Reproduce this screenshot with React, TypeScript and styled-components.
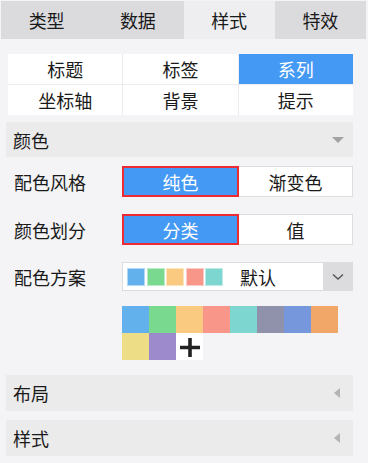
import React from "react";
import styled, { createGlobalStyle } from "styled-components";

const Global = createGlobalStyle`
  html, body { margin: 0; padding: 0; }
  body {
    background: #f4f4f6;
    font-family: "Noto Sans CJK SC", "Noto Sans", sans-serif;
    color: #222;
    width: 368px;
    height: 463px;
    overflow: hidden;
  }
`;

const Page = styled.div`
  display: flex;
  flex-direction: column;
  padding: 1px 2px 0 1px;
`;

const TabBar = styled.div`
  display: grid;
  grid-template-columns: repeat(4, 1fr);
  height: 38px;
  width: 365px;
`;

const Tab = styled.div<{ $active?: boolean }>`
  display: flex;
  align-items: center;
  justify-content: center;
  font-size: 18px;
  background: ${(p) => (p.$active ? "#eeeef0" : "#dbdbde")};
  color: #1a1a1a;
`;

const Body = styled.div`
  display: flex;
  flex-direction: column;
  padding: 15px 14px 0 5px;
`;

const SubGrid = styled.div`
  display: grid;
  grid-template-columns: repeat(3, 1fr);
  grid-auto-rows: 30px;
  gap: 1px;
  margin: 0 0 0 2px;
  width: 345px;
  background: #ececee;
`;

const SubTab = styled.div<{ $active?: boolean }>`
  display: flex;
  align-items: center;
  justify-content: center;
  font-size: 18px;
  background: ${(p) => (p.$active ? "#4499f5" : "#ffffff")};
  color: ${(p) => (p.$active ? "#ffffff" : "#1a1a1a")};
`;

const Section = styled.div<{ $gap: number; $h: number }>`
  display: flex;
  align-items: center;
  justify-content: space-between;
  height: ${(p) => p.$h}px;
  margin-top: ${(p) => p.$gap}px;
  padding: 0 9px 0 7px;
  background: #ebebeb;
  font-size: 18px;
  color: #1a1a1a;
  width: 347px;
  box-sizing: border-box;
`;

const TriDown = styled.span`
  width: 0;
  height: 0;
  border-left: 6px solid transparent;
  border-right: 6px solid transparent;
  border-top: 6px solid #a2a2a2;
`;

const TriLeft = styled.span`
  width: 0;
  height: 0;
  border-top: 5px solid transparent;
  border-bottom: 5px solid transparent;
  border-right: 6px solid #b4b4b4;
  margin-right: 4px;
`;

const Row = styled.div<{ $gap: number }>`
  display: grid;
  grid-template-columns: 116px 231px;
  align-items: center;
  margin-top: ${(p) => p.$gap}px;
`;

const Label = styled.div`
  font-size: 18px;
  padding-left: 8px;
  color: #1a1a1a;
`;

const Segmented = styled.div`
  display: grid;
  grid-template-columns: 117px 114px;
  height: 31px;
`;

const SegBtn = styled.div<{ $active?: boolean }>`
  display: flex;
  align-items: center;
  justify-content: center;
  font-size: 18px;
  box-sizing: border-box;
  background: ${(p) => (p.$active ? "#4499f5" : "#ffffff")};
  color: ${(p) => (p.$active ? "#ffffff" : "#1a1a1a")};
  border: ${(p) => (p.$active ? "2px solid #ee2a33" : "1px solid #dedede")};
  border-left: ${(p) => (p.$active ? "2px solid #ee2a33" : "none")};
`;

const Dropdown = styled.div`
  display: flex;
  align-items: stretch;
  height: 29px;
  box-sizing: border-box;
  border: 1px solid #dcdcdc;
  background: #ffffff;
`;

const SwatchStrip = styled.div`
  display: flex;
  align-items: center;
  gap: 1.5px;
  padding-left: 4px;
`;

const MiniSwatch = styled.span<{ $c: string }>`
  width: 18px;
  height: 18px;
  box-sizing: border-box;
  background: ${(p) => p.$c};
  border: 1px solid rgba(255, 255, 255, 0.5);
`;

const DropText = styled.div`
  flex: 1;
  display: flex;
  align-items: center;
  padding-left: 17px;
  font-size: 18px;
  color: #1a1a1a;
`;

const DropBtn = styled.div`
  width: 29px;
  display: flex;
  align-items: center;
  justify-content: center;
  background: #dcdcdf;
`;

const Palette = styled.div`
  display: grid;
  grid-template-columns: repeat(8, 27px);
  grid-auto-rows: 27px;
  margin: 15px 0 0 116px;
`;

const Cell = styled.div<{ $c: string }>`
  background: ${(p) => p.$c};
  display: flex;
  align-items: center;
  justify-content: center;
`;

const mini = ["#62b0ec", "#79d98f", "#f9ca7f", "#f9968a", "#7dd6cf"];
const palette = [
  "#62b0ec",
  "#79d98f",
  "#f9ca7f",
  "#f9968a",
  "#7dd6cf",
  "#9092ab",
  "#7797dd",
  "#f0a768",
  "#ecdd86",
  "#9c8acc",
];

export default function App() {
  return (
    <>
      <Global />
      <Page>
        <TabBar>
          <Tab>类型</Tab>
          <Tab>数据</Tab>
          <Tab $active>样式</Tab>
          <Tab>特效</Tab>
        </TabBar>
        <Body>
          <SubGrid>
            <SubTab>标题</SubTab>
            <SubTab>标签</SubTab>
            <SubTab $active>系列</SubTab>
            <SubTab>坐标轴</SubTab>
            <SubTab>背景</SubTab>
            <SubTab>提示</SubTab>
          </SubGrid>
          <Section $gap={7} $h={35}>
            颜色
            <TriDown />
          </Section>
          <Row $gap={9}>
            <Label>配色风格</Label>
            <Segmented>
              <SegBtn $active>纯色</SegBtn>
              <SegBtn>渐变色</SegBtn>
            </Segmented>
          </Row>
          <Row $gap={17}>
            <Label>颜色划分</Label>
            <Segmented>
              <SegBtn $active>分类</SegBtn>
              <SegBtn>值</SegBtn>
            </Segmented>
          </Row>
          <Row $gap={17}>
            <Label>配色方案</Label>
            <Dropdown>
              <SwatchStrip>
                {mini.map((c) => (
                  <MiniSwatch key={c} $c={c} />
                ))}
              </SwatchStrip>
              <DropText>默认</DropText>
              <DropBtn>
                <svg width="12" height="8" viewBox="0 0 12 8">
                  <path d="M1 1.5 L6 6 L11 1.5" fill="none" stroke="#555" strokeWidth="1.4" />
                </svg>
              </DropBtn>
            </Dropdown>
          </Row>
          <Palette>
            {palette.map((c, i) => (
              <Cell key={i} $c={c} />
            ))}
            <Cell $c="#ffffff">
              <svg width="24" height="22" viewBox="0 0 24 22">
                <path d="M12 2 V21 M2 11.5 H22" stroke="#222" strokeWidth="3.6" />
              </svg>
            </Cell>
          </Palette>
          <Section $gap={15} $h={36}>
            布局
            <TriLeft />
          </Section>
          <Section $gap={9} $h={36}>
            样式
            <TriLeft />
          </Section>
        </Body>
      </Page>
    </>
  );
}
